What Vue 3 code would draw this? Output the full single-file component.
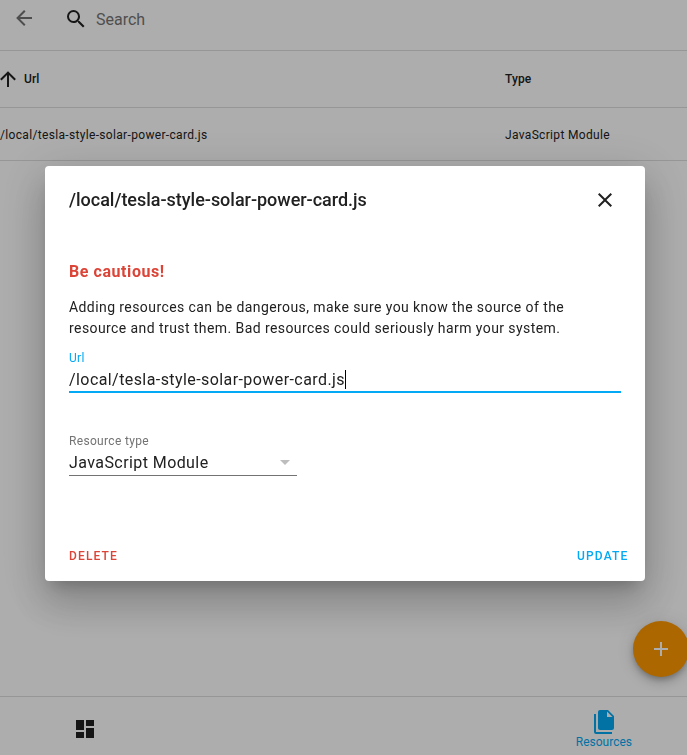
<script setup>
import { ref } from 'vue'

const url = ref('/local/tesla-style-solar-power-card.js')
const resources = [{ url: '/local/tesla-style-solar-power-card.js', type: 'JavaScript Module' }]
</script>

<template>
  <div class="page">
    <header class="toolbar">
      <svg class="icon back" viewBox="0 0 24 24"><path d="M20 11V13H8L13.5 18.5L12.08 19.92L4.16 12L12.08 4.08L13.5 5.5L8 11H20Z" /></svg>
      <svg class="icon search" viewBox="0 0 24 24"><path d="M9.5 3A6.5 6.5 0 0 1 16 9.5C16 11.11 15.41 12.59 14.44 13.73L14.71 14H15.5L20.5 19L19 20.5L14 15.5V14.71L13.73 14.44C12.59 15.41 11.11 16 9.5 16A6.5 6.5 0 0 1 3 9.5A6.5 6.5 0 0 1 9.5 3M9.5 5C7 5 5 7 5 9.5C5 12 7 14 9.5 14C12 14 14 12 14 9.5C14 7 12 5 9.5 5Z" /></svg>
      <span class="placeholder">Search</span>
    </header>
    <div class="row head">
      <div class="cell url">
        <svg class="icon sort" viewBox="0 0 24 24"><path d="M13 20H11V8L5.5 13.5L4.08 12.08L12 4.16L19.92 12.08L18.5 13.5L13 8V20Z" /></svg>
        <span>Url</span>
      </div>
      <div class="cell"><span>Type</span></div>
    </div>
    <div v-for="r in resources" :key="r.url" class="row item">
      <div class="cell url"><span>{{ r.url }}</span></div>
      <div class="cell"><span>{{ r.type }}</span></div>
    </div>
    <main class="space">
      <button class="fab" aria-label="Add">
        <svg class="icon" viewBox="0 0 24 24"><path d="M19 13H13V19H11V13H5V11H11V5H13V11H19V13Z" /></svg>
      </button>
    </main>
    <nav class="tabs">
      <div class="tab dash">
        <svg class="icon" viewBox="0 0 24 24"><path d="M13 3V9H21V3M13 21H21V11H13M3 21H11V15H3M3 13H11V3H3V13Z" /></svg>
      </div>
      <div class="tab active">
        <svg class="icon files" viewBox="0 0 24 24"><path d="M15 7H20.5L15 1.5V7M8 0H16L22 6V18A2 2 0 0 1 20 20H8C6.89 20 6 19.1 6 18V2A2 2 0 0 1 8 0M4 4V22H20V24H4A2 2 0 0 1 2 22V4H4Z" /></svg>
        <span>Resources</span>
      </div>
    </nav>
  </div>

  <div class="scrim">
    <section class="dialog" role="dialog">
      <div class="title">
        <h2>{{ url }}</h2>
        <svg class="icon" viewBox="0 0 24 24"><path d="M19 6.41L17.59 5L12 10.59L6.41 5L5 6.41L10.59 12L5 17.59L6.41 19L12 13.41L17.59 19L19 17.59L13.41 12L19 6.41Z" /></svg>
      </div>
      <h3>Be cautious!</h3>
      <p>Adding resources can be dangerous, make sure you know the source of the resource and trust them. Bad resources could seriously harm your system.</p>
      <div class="field focused">
        <label>Url</label>
        <div class="value"><span>{{ url }}</span><i class="caret"></i></div>
      </div>
      <div class="field select">
        <label>Resource type</label>
        <div class="value">
          <span>JavaScript Module</span>
          <svg class="icon" viewBox="0 0 24 24"><path d="M7 10L12 15L17 10H7Z" /></svg>
        </div>
      </div>
      <footer class="actions">
        <button class="delete">Delete</button>
        <button class="update">Update</button>
      </footer>
    </section>
  </div>
</template>

<style>
body {
  margin: 0;
  overflow: hidden;
  background: #fff;
}
</style>

<style scoped>
.page {
  display: flex;
  flex-direction: column;
  height: 755px;
  overflow: hidden;
  font-family: Roboto, sans-serif;
  color: #212121;
}
.icon {
  display: block;
  flex: none;
  width: 24px;
  height: 24px;
  fill: currentColor;
}
button {
  border: 0;
  padding: 0;
  background: none;
  font-family: inherit;
}
.toolbar {
  display: flex;
  height: 50px;
  flex: none;
  border-bottom: 1px solid #dedede;
}
.back {
  margin: 6px 0 0 12px;
  color: #737373;
}
.search {
  margin: 7px 0 0 28px;
}
.placeholder {
  margin: 10px 0 0 8px;
  font-size: 16px;
  line-height: 20px;
  color: #757575;
}
.row {
  display: flex;
  box-sizing: border-box;
  height: 57px;
  flex: none;
  border-bottom: 1px solid #dedede;
  font-size: 12px;
}
.head {
  font-weight: 500;
  letter-spacing: 0.1px;
}
.item {
  height: 53px;
  padding-top: 2px;
  letter-spacing: 0.33px;
}
.cell {
  display: flex;
  align-items: center;
}
.cell.url {
  width: 505px;
}
.sort {
  margin: 0 4px 0 -4px;
}
.space {
  display: flex;
  flex: 1;
  align-items: flex-end;
  justify-content: flex-end;
}
.fab {
  display: flex;
  align-items: center;
  justify-content: center;
  width: 56px;
  height: 56px;
  margin: 0 -2px 19px 0;
  border-radius: 50%;
  background: #ff9800;
  color: #fff;
  box-shadow: 0 3px 5px -1px rgba(0, 0, 0, .2), 0 6px 10px rgba(0, 0, 0, .14), 0 1px 18px rgba(0, 0, 0, .12);
}
.tabs {
  display: flex;
  height: 58px;
  flex: none;
  justify-content: space-between;
  border-top: 1px solid #dedede;
}
.tab {
  display: flex;
  flex-direction: column;
  align-items: center;
}
.dash {
  margin-left: 73px;
  padding-top: 20px;
}
.active {
  margin-right: 55px;
  padding-top: 13px;
  color: #03a9f4;
  font-size: 12px;
  line-height: 16px;
}
.scrim {
  position: fixed;
  inset: 0;
  display: flex;
  align-items: flex-start;
  justify-content: center;
  background: rgba(0, 0, 0, .32);
  font-family: Roboto, sans-serif;
  color: #212121;
}
.dialog {
  display: flex;
  flex-direction: column;
  box-sizing: border-box;
  width: 600px;
  height: 415px;
  margin: 166px 0 0 3px;
  padding: 0 24px;
  border-radius: 4px;
  background: #fff;
  box-shadow: 0 11px 15px -7px rgba(0, 0, 0, .2), 0 24px 38px 3px rgba(0, 0, 0, .14), 0 9px 46px 8px rgba(0, 0, 0, .12);
}
.title {
  display: flex;
  justify-content: space-between;
  align-items: center;
  height: 68px;
  padding-right: 4px;
}
h2 {
  margin: 0 0 1px;
  font-size: 18px;
  line-height: 21px;
  font-weight: 500;
  letter-spacing: -0.02px;
}
h3 {
  margin: 28px 0 0;
  font-size: 16px;
  line-height: 20px;
  font-weight: 700;
  letter-spacing: 0.57px;
  color: #db4437;
}
p {
  margin: 15px 0 0;
  font-size: 14px;
  line-height: 21px;
  letter-spacing: 0.42px;
}
.field {
  margin-top: 12px;
}
.field label {
  display: block;
  font-size: 12px;
  line-height: 14px;
  letter-spacing: 0.1px;
}
.value {
  display: flex;
  box-sizing: border-box;
  align-items: center;
  height: 28px;
  padding-top: 2px;
  font-size: 16px;
  line-height: 20px;
  letter-spacing: 0.42px;
}
.value span {
  padding-top: 2px;
}
.focused label {
  color: #03a9f4;
  letter-spacing: 0.3px;
}
.focused .value {
  border-bottom: 2px solid #03a9f4;
}
.caret {
  width: 1px;
  height: 19px;
  background: #000;
}
.select {
  width: 228px;
  margin-top: 41px;
}
.select label {
  color: #737373;
  letter-spacing: 0.33px;
}
.select .value {
  justify-content: space-between;
  padding-top: 1px;
  border-bottom: 1px solid #737373;
}
.select .icon {
  color: #bdbdbd;
}
.actions {
  display: flex;
  justify-content: space-between;
  margin: auto -7.5px 17px 0;
}
.actions button {
  font-size: 12px;
  line-height: 16px;
  font-weight: 500;
  letter-spacing: 1.15px;
  text-transform: uppercase;
}
.delete {
  color: #db4437;
}
.update {
  color: #03a9f4;
}
</style>
